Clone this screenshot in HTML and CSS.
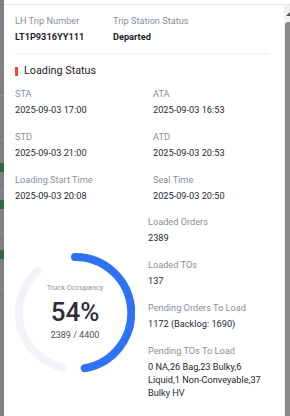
FILE: index.html
```html
<!DOCTYPE html>
<html>
<head>
<meta charset="utf-8">
<link rel="stylesheet" href="styles.css">
</head>
<body>
<div class="backdrop">
  <div class="bd-gap" style="height:95px"></div><div class="bd-line"></div>
  <div class="bd-gap" style="height:44px"></div><div class="bd-line"></div>
  <div class="bd-gap" style="height:22px"></div><div class="bd-green"></div>
  <div class="bd-gap" style="height:18px"></div><div class="bd-line"></div>
  <div class="bd-gap" style="height:9px"></div><div class="bd-green"></div>
  <div class="bd-gap" style="height:24px"></div><div class="bd-line"></div>
  <div class="bd-gap" style="height:16px"></div><div class="bd-green"></div>
  <div class="bd-gap" style="height:30px"></div><div class="bd-line"></div>
</div>
<div class="panel">
  <div class="panel-top"></div>
  <div class="panel-body">
    <div class="content">
      <div class="grid grid-top">
        <div class="field">
          <div class="label">LH Trip Number</div>
          <div class="value strong">LT1P9316YY111</div>
        </div>
        <div class="field">
          <div class="label">Trip Station Status</div>
          <div class="value strong">Departed</div>
        </div>
      </div>
      <div class="divider"></div>
      <div class="section-title"><span class="bar"></span>Loading Status</div>
      <div class="grid grid-times">
        <div class="field"><div class="label">STA</div><div class="value">2025-09-03 17:00</div></div>
        <div class="field"><div class="label">ATA</div><div class="value">2025-09-03 16:53</div></div>
        <div class="field"><div class="label">STD</div><div class="value">2025-09-03 21:00</div></div>
        <div class="field"><div class="label">ATD</div><div class="value">2025-09-03 20:53</div></div>
        <div class="field"><div class="label">Loading Start Time</div><div class="value">2025-09-03 20:08</div></div>
        <div class="field"><div class="label">Seal Time</div><div class="value">2025-09-03 20:50</div></div>
      </div>
      <div class="occupancy">
        <div class="chart">
          <svg class="ring" width="120" height="120" viewBox="0 0 120 120">
            <path d="M48.4 114.8 A56 56 0 0 1 22.5 18.4" fill="none" stroke="#f1f3f8" stroke-width="8" stroke-linecap="round"/>
            <path d="M60 4 A56 56 0 0 1 69.7 115.2" fill="none" stroke="#2f72f5" stroke-width="8" stroke-linecap="round"/>
          </svg>
          <div class="chart-text">
            <div class="chart-label">Truck Occupancy</div>
            <div class="chart-pct">54%</div>
            <div class="chart-sub">2389 / 4400</div>
          </div>
        </div>
        <div class="stats">
          <div class="field"><div class="label">Loaded Orders</div><div class="value">2389</div></div>
          <div class="field"><div class="label">Loaded TOs</div><div class="value">137</div></div>
          <div class="field"><div class="label">Pending Orders To Load</div><div class="value">1172 (Backlog: 1690)</div></div>
          <div class="field"><div class="label">Pending TOs To Load</div><div class="value">0 NA,26 Bag,23 Bulky,6 Liquid,1 Non-Conveyable,37 Bulky HV</div></div>
        </div>
      </div>
      <div class="section-title next"><span class="bar"></span>Loading Details</div>
    </div>
    <div class="scrollbar">
      <div class="sb-arrow"></div>
      <div class="sb-thumb"></div>
    </div>
  </div>
</div>
</body>
</html>
```
FILE: styles.css
```css
* { box-sizing: border-box; }
html, body {
  margin: 0;
  padding: 0;
}
body {
  width: 290px;
  height: 416px;
  overflow: hidden;
  display: flex;
  background: #808080;
  font-family: Roboto, "Liberation Sans", sans-serif;
  color: #1f2329;
}
.backdrop {
  width: 4px;
  flex: none;
  display: flex;
  flex-direction: column;
}
.bd-line { height: 1px; background: #8f8f8f; }
.bd-green { height: 9px; background: #2f6a43; }

.panel {
  flex: 1;
  background: #fff;
  display: flex;
  flex-direction: column;
  min-width: 0;
}
.panel-top {
  height: 5px;
  border-bottom: 1px solid #e3e6ee;
  flex: none;
}
.panel-body {
  flex: 1;
  display: flex;
  min-height: 0;
}
.content {
  flex: 1;
  padding: 10px 12px 0 11px;
  overflow: hidden;
}
.grid {
  display: grid;
  column-gap: 10px;
}
.grid-top { grid-template-columns: 88px 1fr; }
.grid-times {
  grid-template-columns: 128px 1fr;
  row-gap: 15px;
  margin-top: 10px;
}
.label {
  font-size: 9.2px;
  line-height: 12px;
  color: #8a9099;
  white-space: nowrap;
}
.value {
  font-size: 9.2px;
  line-height: 13px;
  color: #262a30;
  margin-top: 3px;
}
.value.strong {
  font-weight: 700;
  color: #1f2329;
}
.divider {
  height: 1px;
  background: #eceef2;
  margin: 10px 3px 10px 0;
}
.section-title {
  display: flex;
  align-items: center;
  gap: 6px;
  font-size: 10.8px;
  line-height: 14px;
  color: #1f2329;
}
.section-title .bar {
  width: 3px;
  height: 9px;
  background: #f5462f;
  flex: none;
}

.occupancy {
  display: flex;
  align-items: flex-start;
  gap: 13px;
  margin-top: 14px;
}
.chart {
  position: relative;
  width: 120px;
  height: 120px;
  flex: none;
  margin-top: 37px;
}
.ring { display: block; }
.chart-text {
  position: absolute;
  inset: 0;
  display: flex;
  flex-direction: column;
  align-items: center;
  justify-content: center;
}
.chart-label {
  font-size: 7.4px;
  line-height: 10px;
  color: #8a9099;
  margin-top: -2px;
}
.chart-pct {
  font-size: 26px;
  line-height: 30px;
  font-weight: 500;
  color: #2b2f36;
  margin-top: 4px;
}
.chart-sub {
  font-size: 9px;
  line-height: 12px;
  color: #4a4f57;
  margin-top: 2px;
}
.stats {
  flex: 1;
  display: flex;
  flex-direction: column;
  gap: 15px;
  padding-right: 10px;
}
.section-title.next { margin-top: 16px; }

.scrollbar {
  width: 6px;
  flex: none;
  background: #f1f1f1;
  display: flex;
  flex-direction: column;
  align-items: flex-end;
  padding-top: 7px;
}
.sb-arrow {
  width: 0;
  height: 0;
  border-left: 4px solid transparent;
  border-bottom: 4px solid #505050;
}
.sb-thumb {
  margin-top: 6px;
  width: 5px;
  flex: 1;
  background: #8a8a8a;
  border-top-left-radius: 3px;
}
```
